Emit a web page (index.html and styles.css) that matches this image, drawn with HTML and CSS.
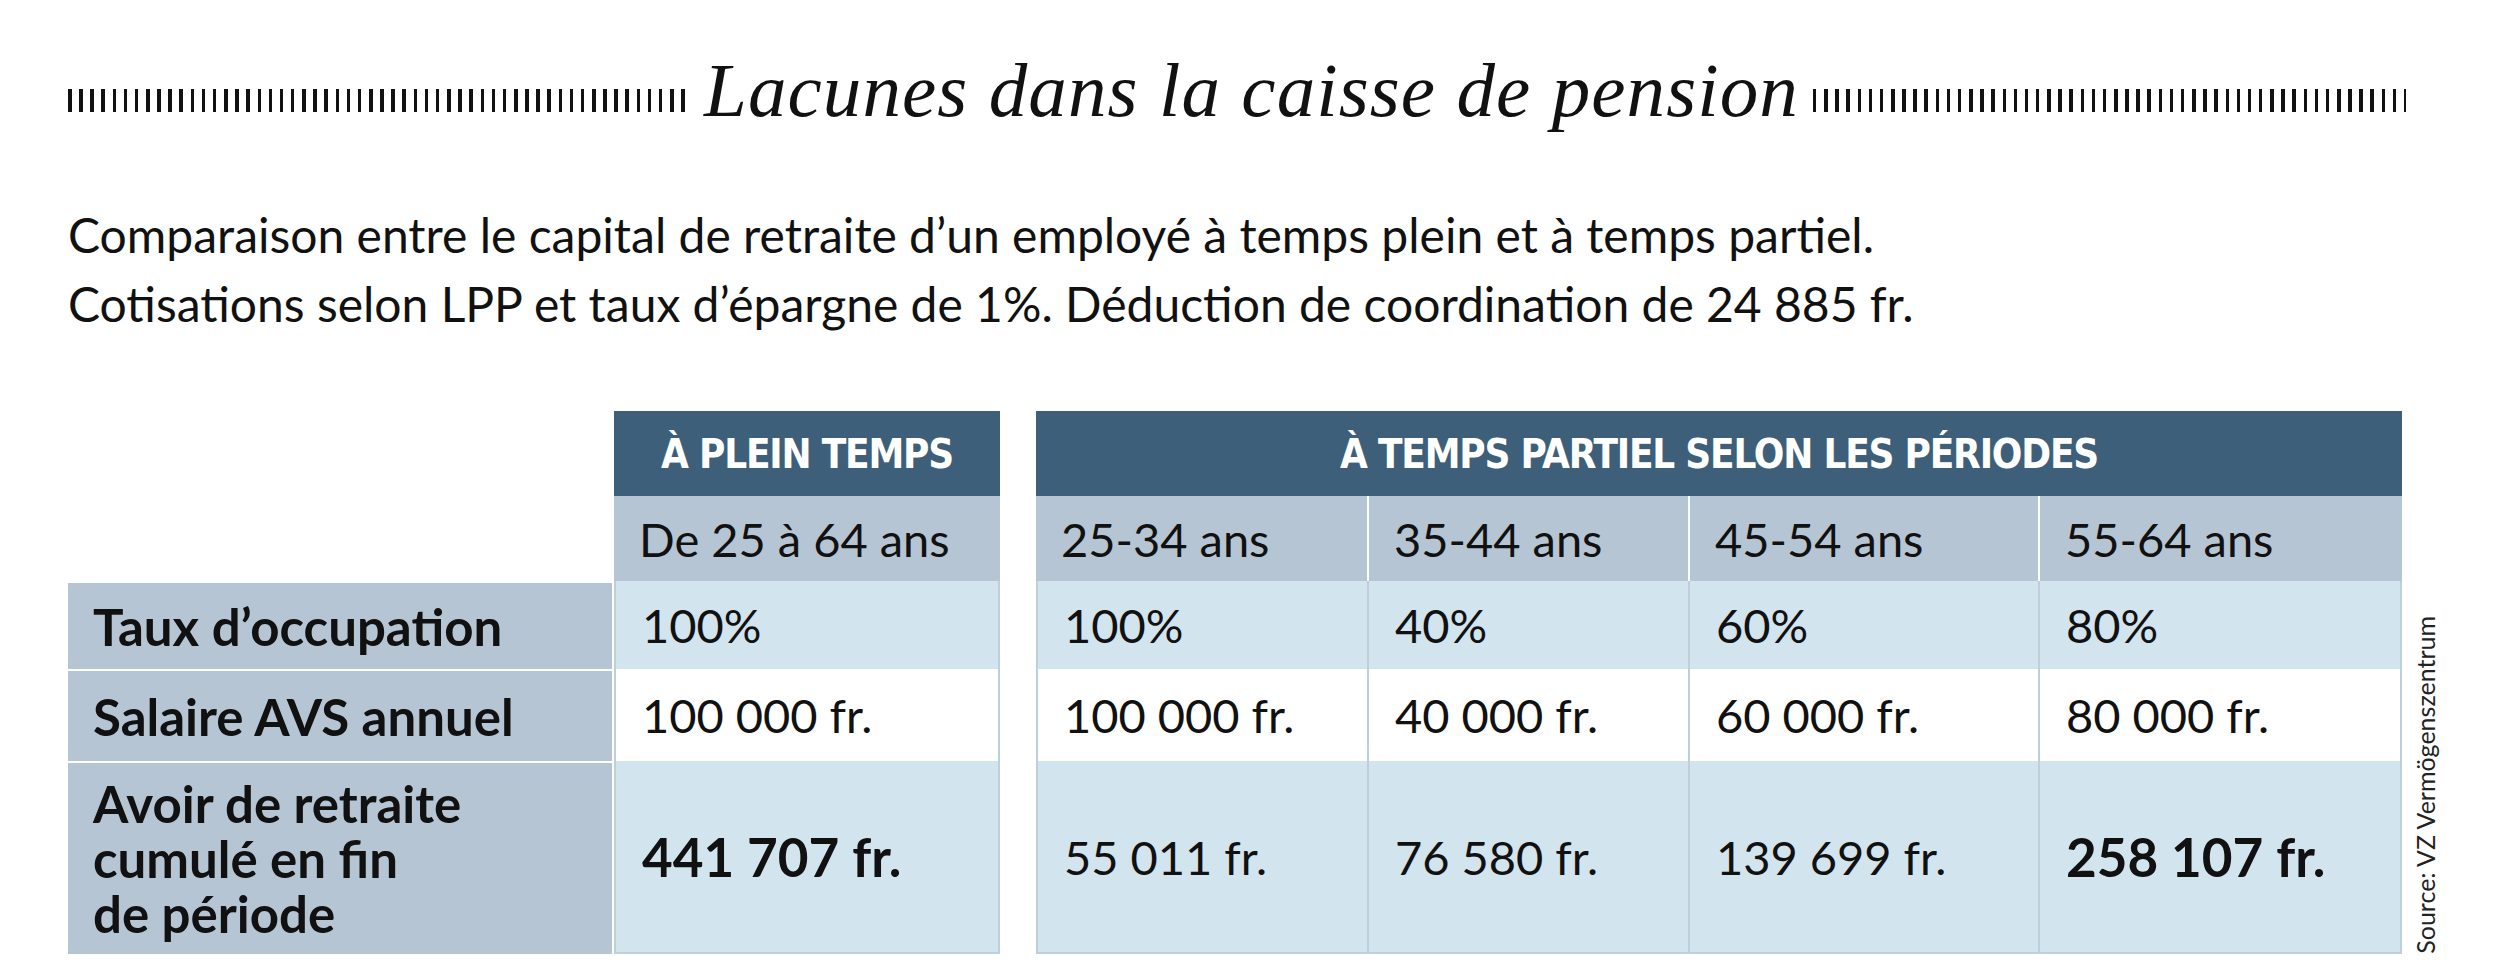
FILE: index.html
```html
<!DOCTYPE html>
<html lang="fr">
<head>
<meta charset="utf-8">
<title>Lacunes dans la caisse de pension</title>
<link rel="stylesheet" href="styles.css">
</head>
<body>
<div class="page">
  <header class="title-row">
    <div class="ticks ticks-left"></div>
    <h1 class="title">Lacunes dans la caisse de pension</h1>
    <div class="ticks ticks-right"></div>
  </header>
  <p class="intro">Comparaison entre le capital de retraite d’un employé à temps plein et à temps partiel.<br>Cotisations selon LPP et taux d’épargne de 1%. Déduction de coordination de 24 885 fr.</p>
  <div class="table-wrap">
    <div class="grid">
      <div class="corner"></div>
      <div class="head">À PLEIN TEMPS</div>
      <div class="spacer"></div>
      <div class="head head-part">À TEMPS PARTIEL SELON LES PÉRIODES</div>

      <div class="sub">De 25 à 64 ans</div>
      <div class="sub sub-part">25-34 ans</div>
      <div class="sub sub-part">35-44 ans</div>
      <div class="sub sub-part">45-54 ans</div>
      <div class="sub">55-64 ans</div>

      <div class="label">Taux d’occupation</div>
      <div class="cell shade edge">100%</div>
      <div class="cell shade edge">100%</div>
      <div class="cell shade">40%</div>
      <div class="cell shade">60%</div>
      <div class="cell shade">80%</div>

      <div class="label">Salaire AVS annuel</div>
      <div class="cell edge">100 000 fr.</div>
      <div class="cell edge">100 000 fr.</div>
      <div class="cell">40 000 fr.</div>
      <div class="cell">60 000 fr.</div>
      <div class="cell">80 000 fr.</div>

      <div class="label label-multi">Avoir de retraite<br>cumulé en fin<br>de période</div>
      <div class="cell shade edge last strong">441 707 fr.</div>
      <div class="cell shade edge last">55 011 fr.</div>
      <div class="cell shade last">76 580 fr.</div>
      <div class="cell shade last">139 699 fr.</div>
      <div class="cell shade last strong">258 107 fr.</div>
    </div>
    <div class="source">Source: VZ Vermögenszentrum</div>
  </div>
</div>
</body>
</html>
```

FILE: styles.css
```css
body {
  margin: 0;
  background: #ffffff;
  color: #111111;
  font-family: Lato, "Noto Sans", sans-serif;
}

.page {
  width: 2338px;
  padding: 52px 0 0 68px;
}

.title-row {
  display: flex;
  align-items: flex-start;
  gap: 14px;
}

.ticks {
  height: 23px;
  margin-top: 37px;
  background: repeating-linear-gradient(to right, #111111 0 3.5px, transparent 3.5px 11.15px);
}

.ticks-left {
  flex: none;
  width: 622px;
}

.ticks-right {
  flex: 1;
}

.title {
  margin: 0;
  font-family: "Liberation Serif", serif;
  font-style: italic;
  font-weight: 400;
  font-size: 77px;
  line-height: 76px;
  letter-spacing: 1.1px;
  white-space: nowrap;
}

.intro {
  margin: 72px 0 0;
  font-size: 48px;
  line-height: 69px;
}

.table-wrap {
  display: flex;
  align-items: flex-end;
  margin-top: 73px;
}

.grid {
  display: grid;
  grid-template-columns: 546px 386px 36px 333px 321px 350px 362px;
  grid-template-rows: 85px 85px 88px 92px 193px;
}

.corner {
  grid-row: span 2;
}

.spacer {
  grid-row: span 5;
}

.head {
  display: flex;
  align-items: center;
  justify-content: center;
  background: #3e5f79;
  color: #ffffff;
  font-family: "DejaVu Sans Condensed", "DejaVu Sans", sans-serif;
  font-stretch: condensed;
  font-weight: 700;
  font-size: 40px;
  letter-spacing: -1.2px;
}

.head-part {
  grid-column: span 4;
}

.sub {
  display: flex;
  align-items: center;
  padding-left: 25px;
  background: #b6c5d3;
  font-size: 47px;
}

.sub-part {
  border-right: 2px solid #ffffff;
}

.label {
  display: flex;
  align-items: center;
  margin: 2px 2px 0 0;
  padding-left: 25px;
  background: #b6c5d3;
  font-size: 51px;
  font-weight: 700;
}

.label-multi {
  line-height: 55px;
}

.cell {
  display: flex;
  align-items: center;
  padding-left: 26px;
  font-size: 47px;
  background: #ffffff;
  border-right: 2px solid #bfcedb;
}

.cell.edge {
  border-left: 2px solid #bfcedb;
}

.cell.shade {
  background: #d2e4ee;
}

.cell.last {
  border-bottom: 2px solid #bfcedb;
}

.cell.strong {
  font-size: 53px;
  font-weight: 700;
}

.source {
  margin-left: 9px;
  writing-mode: vertical-rl;
  transform: rotate(180deg);
  font-size: 25px;
  line-height: 28px;
  color: #222222;
  white-space: nowrap;
}
```
